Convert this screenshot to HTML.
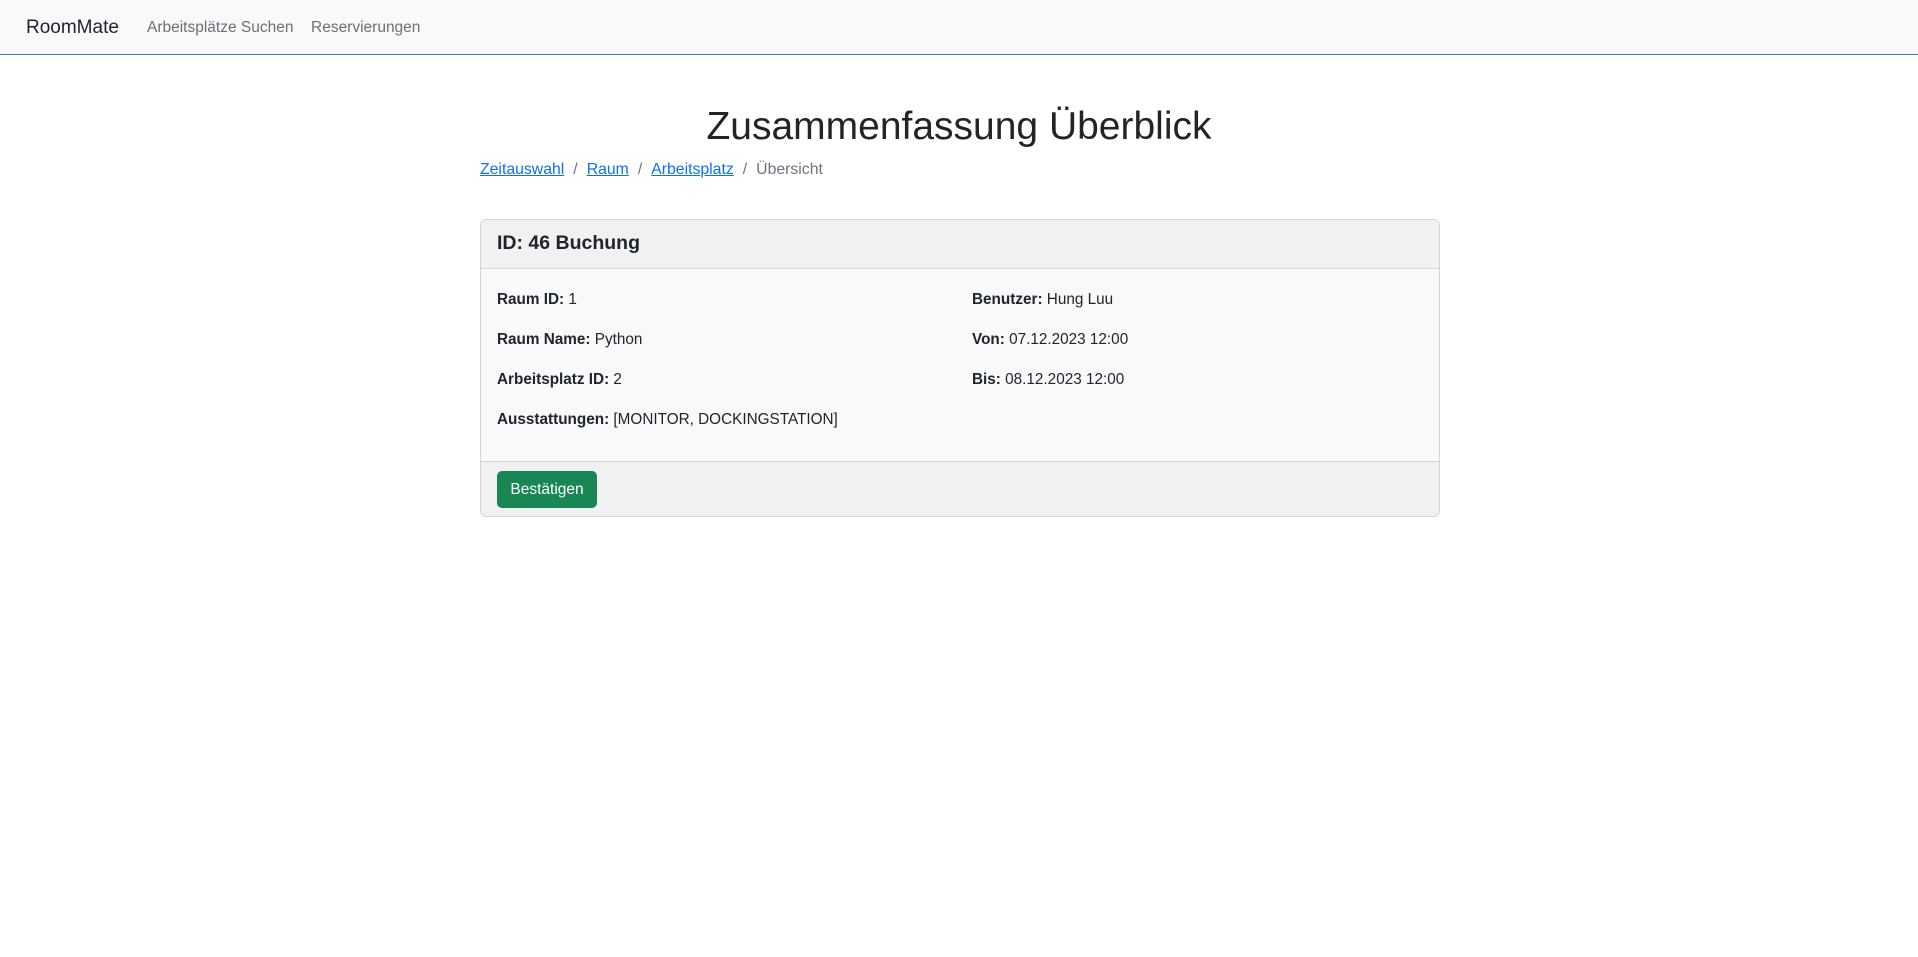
<!DOCTYPE html>
<html><head><meta charset="utf-8"><style>
*{box-sizing:border-box;margin:0;padding:0}
body{width:1918px;height:957px;background:#fff;font-family:"Liberation Sans",sans-serif;color:#212529;font-size:16px;overflow:hidden}
.nav{height:55px;background:#f8f9fa;border-bottom:1px solid #3d74c9;position:relative}
.nav span{position:absolute;top:1px;line-height:54px}
.brand{left:26px;font-size:19px;color:#212529}
.l1{left:147px;color:#6c6f73;font-size:15.5px}
.l2{left:311px;color:#6c6f73;font-size:15.5px}
h1{position:absolute;top:105px;left:0;width:1918px;text-align:center;font-size:39px;font-weight:400;color:#212529}
.bc{position:absolute;top:161px;left:480px;font-size:15.8px;color:#6c757d}
.bc a{color:#0d6efd;text-decoration:underline}
.bc i{font-style:normal;margin:0 9px}
.card{position:absolute;left:480px;top:219px;width:960px;height:298px;border:1px solid #d3d6d9;border-radius:6px;background:#f8f9fa;overflow:hidden}
.hd{height:49px;background:#f0f1f2;border-bottom:1px solid #d3d6d9;padding:0 16px;line-height:46px;font-size:19.5px;font-weight:bold}
.row{position:absolute;font-size:15.3px}
.ft{position:absolute;left:0;top:241px;width:100%;height:57px;background:#f0f1f2;border-top:1px solid #d3d6d9}
.btn{position:absolute;left:16px;top:9px;width:100px;height:37px;background:#198754;color:#fff;border-radius:5px;text-align:center;line-height:38px;font-size:15.5px}
</style></head><body>
<div class="nav"><span class="brand">RoomMate</span><span class="l1">Arbeitsplätze Suchen</span><span class="l2">Reservierungen</span></div>
<h1>Zusammenfassung Überblick</h1>
<div class="bc"><a>Zeitauswahl</a><i>/</i><a>Raum</a><i>/</i><a>Arbeitsplatz</a><i>/</i>Übersicht</div>
<div class="card">
<div class="hd">ID: 46 Buchung</div>
<div class="row" style="left:16px;top:71px"><b>Raum ID:</b> 1</div>
<div class="row" style="left:16px;top:111px"><b>Raum Name:</b> Python</div>
<div class="row" style="left:16px;top:151px"><b>Arbeitsplatz ID:</b> 2</div>
<div class="row" style="left:16px;top:191px"><b>Ausstattungen:</b> [MONITOR, DOCKINGSTATION]</div>
<div class="row" style="left:491px;top:71px"><b>Benutzer:</b> Hung Luu</div>
<div class="row" style="left:491px;top:111px"><b>Von:</b> 07.12.2023 12:00</div>
<div class="row" style="left:491px;top:151px"><b>Bis:</b> 08.12.2023 12:00</div>
<div class="ft"><div class="btn">Bestätigen</div></div>
</div>
</body></html>
